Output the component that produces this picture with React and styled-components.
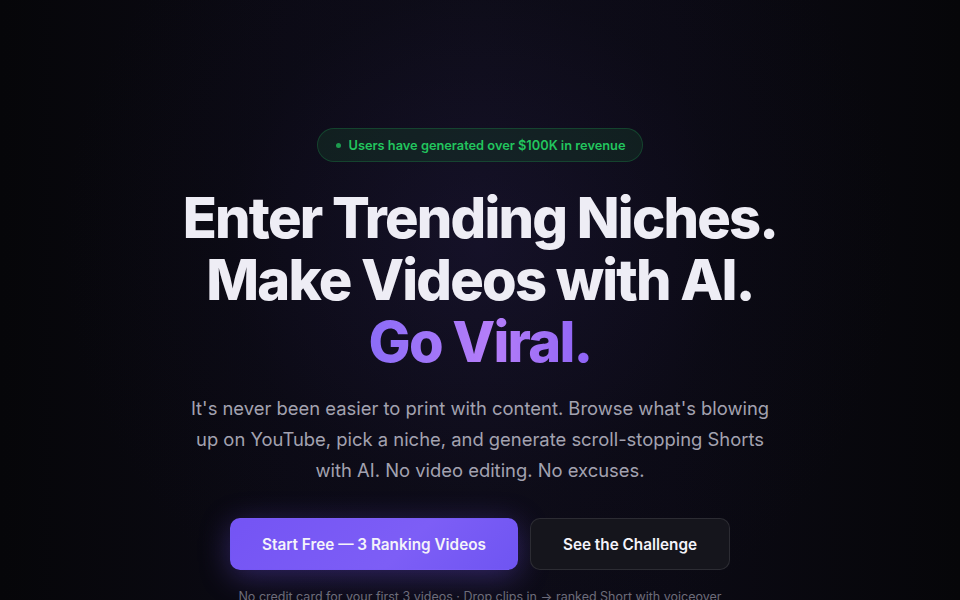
import React from 'react'
import styled, {createGlobalStyle} from 'styled-components'

const GlobalStyle = createGlobalStyle`
  html, body {
    margin: 0;
    padding: 0;
    background: #07070b;
  }
  body {
    font-family: Inter, "Noto Sans", sans-serif;
    -webkit-font-smoothing: antialiased;
  }
`

const Page = styled.main`
  min-height: 600px;
  overflow: hidden;
  background:
    radial-gradient(ellipse 420px 420px at 50% 40%, rgba(40, 30, 80, 0.3), rgba(20, 16, 40, 0.12) 60%, transparent 100%),
    linear-gradient(90deg, #060609 0%, #0b0a14 30%, #0d0c17 50%, #0b0a14 70%, #060609 100%);
`

const Hero = styled.section`
  display: flex;
  flex-direction: column;
  align-items: center;
  padding-top: 128px;
  text-align: center;
`

const Badge = styled.div`
  display: flex;
  align-items: center;
  gap: 8px;
  height: 34px;
  box-sizing: border-box;
  padding: 0 17px 0 18px;
  border-radius: 999px;
  border: 1px solid rgba(34, 197, 94, 0.22);
  background: rgba(22, 70, 44, 0.35);
  color: #22c55e;
  font-size: 12.8px;
  font-weight: 600;
  white-space: nowrap;
`

const Dot = styled.span`
  width: 5px;
  height: 5px;
  border-radius: 50%;
  background: #22c55e;
  opacity: 0.75;
`

const Title = styled.h1`
  margin: 25px 0 0;
  font-size: 56px;
  line-height: 62px;
  font-weight: 800;
  letter-spacing: -1.8px;
  color: #eeedf5;
`

const Accent = styled.span`
  background: linear-gradient(90deg, #8b6cf7 0%, #b57ef9 55%, #8d63f5 100%);
  -webkit-background-clip: text;
  background-clip: text;
  color: transparent;
`

const Lead = styled.p`
  margin: 20px 0 0;
  max-width: 600px;
  font-size: 18.4px;
  line-height: 31px;
  color: #a3a2b0;
`

const Actions = styled.div`
  display: flex;
  gap: 12px;
  margin-top: 32px;
`

const Button = styled.button`
  height: 52px;
  box-sizing: border-box;
  padding: 0;
  width: ${p => (p.$primary ? '288px' : '200px')};
  white-space: nowrap;
  border-radius: 10px;
  font-family: inherit;
  font-size: 15.3px;
  font-weight: 600;
  color: #f4f3fa;
  cursor: pointer;
  border: 1px solid ${p => (p.$primary ? 'transparent' : 'rgba(255,255,255,0.1)')};
  background: ${p =>
    p.$primary
      ? 'linear-gradient(135deg, #7454f4 0%, #7d5ef6 60%, #6f55f2 100%)'
      : '#15151c'};
  box-shadow: ${p =>
    p.$primary ? '0 6px 30px rgba(118, 86, 245, 0.35)' : 'none'};
`

const Note = styled.p`
  margin: 17px 0 0;
  font-size: 12.5px;
  line-height: 20px;
  color: #6d6c7a;
  white-space: nowrap;
`

export default function App() {
  return (
    <>
      <GlobalStyle />
      <Page>
        <Hero>
          <Badge>
            <Dot />
            Users have generated over $100K in revenue
          </Badge>
          <Title>
            Enter Trending Niches.
            <br />
            Make Videos with AI.
            <br />
            <Accent>Go Viral.</Accent>
          </Title>
          <Lead>
            It's never been easier to print with content. Browse what's blowing
            up on YouTube, pick a niche, and generate scroll-stopping Shorts
            with AI. No video editing. No excuses.
          </Lead>
          <Actions>
            <Button $primary>Start Free — 3 Ranking Videos</Button>
            <Button>See the Challenge</Button>
          </Actions>
          <Note>
            No credit card for your first 3 videos · Drop clips in → ranked
            Short with voiceover
          </Note>
        </Hero>
      </Page>
    </>
  )
}
